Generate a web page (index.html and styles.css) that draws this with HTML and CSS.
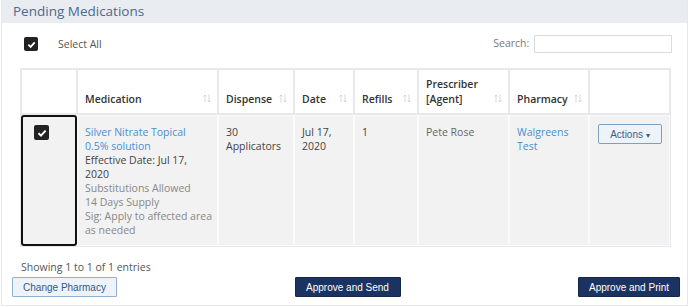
FILE: index.html
```html
<!DOCTYPE html>
<html lang="en">
  <head>
    <meta charset="UTF-8" />
    <title>Pending Medications</title>
    <link rel="stylesheet" href="styles.css">
  </head>
  <body>
    <div class="panel">
      <div class="panel-heading">Pending Medications</div>

      <div class="toolbar">
        <label class="select-all">
          <span class="check"><svg viewBox="0 0 10 10" width="9" height="9"><path d="M1.5 5.2 L4 7.6 L8.6 2.6" fill="none" stroke="#fff" stroke-width="2"/></svg></span>
          <span class="select-label">Select All</span>
        </label>
        <label class="search">Search: <input type="text"></label>
      </div>

      <table class="meds">
        <colgroup>
          <col class="col-sel">
          <col class="col-med">
          <col class="col-disp">
          <col class="col-date">
          <col class="col-ref">
          <col class="col-pres">
          <col class="col-pharm">
          <col class="col-act">
        </colgroup>
        <thead>
          <tr>
            <th></th>
            <th>Medication <span class="sort"><svg viewBox="0 0 8 9" width="8" height="9"><path d="M2 8.5V1 M0.5 2.5 L2 1 L3.5 2.5 M6 0.5V8 M4.5 6.5 L6 8 L7.5 6.5" fill="none" stroke="#cfd3d8" stroke-width="0.9"/></svg></span></th>
            <th>Dispense <span class="sort"><svg viewBox="0 0 8 9" width="8" height="9"><path d="M2 8.5V1 M0.5 2.5 L2 1 L3.5 2.5 M6 0.5V8 M4.5 6.5 L6 8 L7.5 6.5" fill="none" stroke="#cfd3d8" stroke-width="0.9"/></svg></span></th>
            <th>Date <span class="sort"><svg viewBox="0 0 8 9" width="8" height="9"><path d="M2 8.5V1 M0.5 2.5 L2 1 L3.5 2.5 M6 0.5V8 M4.5 6.5 L6 8 L7.5 6.5" fill="none" stroke="#cfd3d8" stroke-width="0.9"/></svg></span></th>
            <th>Refills <span class="sort"><svg viewBox="0 0 8 9" width="8" height="9"><path d="M2 8.5V1 M0.5 2.5 L2 1 L3.5 2.5 M6 0.5V8 M4.5 6.5 L6 8 L7.5 6.5" fill="none" stroke="#cfd3d8" stroke-width="0.9"/></svg></span></th>
            <th>Prescriber<br>[Agent] <span class="sort"><svg viewBox="0 0 8 9" width="8" height="9"><path d="M2 8.5V1 M0.5 2.5 L2 1 L3.5 2.5 M6 0.5V8 M4.5 6.5 L6 8 L7.5 6.5" fill="none" stroke="#cfd3d8" stroke-width="0.9"/></svg></span></th>
            <th>Pharmacy <span class="sort"><svg viewBox="0 0 8 9" width="8" height="9"><path d="M2 8.5V1 M0.5 2.5 L2 1 L3.5 2.5 M6 0.5V8 M4.5 6.5 L6 8 L7.5 6.5" fill="none" stroke="#cfd3d8" stroke-width="0.9"/></svg></span></th>
            <th></th>
          </tr>
        </thead>
        <tbody>
          <tr>
            <td class="cell-sel">
              <span class="check check-row"><svg viewBox="0 0 10 10" width="10" height="10"><path d="M1.5 5.2 L4 7.6 L8.6 2.6" fill="none" stroke="#fff" stroke-width="2"/></svg></span>
            </td>
            <td class="cell-med">
              <a href="#" class="link">Silver Nitrate Topical<br>0.5% solution</a><br>
              Effective Date: Jul 17, 2020<br>
              <span class="muted">Substitutions Allowed<br>14 Days Supply<br>Sig: Apply to affected area as needed</span>
            </td>
            <td>30 Applicators</td>
            <td>Jul 17, 2020</td>
            <td>1</td>
            <td class="muted">Pete Rose</td>
            <td><a href="#" class="link">Walgreens Test</a></td>
            <td><button class="btn-actions">Actions <span class="caret">&#9662;</span></button></td>
          </tr>
        </tbody>
      </table>

      <div class="info">Showing 1 to 1 of 1 entries</div>

      <div class="buttons">
        <button class="btn btn-light">Change Pharmacy</button>
        <button class="btn btn-dark">Approve and Send</button>
        <button class="btn btn-dark">Approve and Print</button>
      </div>
    </div>
  </body>
</html>
```

FILE: styles.css
```css
body {
  margin: 0;
  font-family: "Open Sans", "Liberation Sans", sans-serif;
  font-size: 10.5px;
  color: #444;
  background-color: #fff;
}
.panel {
  width: 685px;
  height: 305px;
  margin-left: 1px;
  border: 1px solid #e6e8eb;
  border-top: none;
}
.panel-heading {
  height: 23px;
  line-height: 23px;
  padding-left: 11px;
  font-size: 13.5px;
  color: #4b6a92;
  background-color: #e9ecf0;
}
.toolbar {
  display: flex;
  justify-content: space-between;
  align-items: center;
  height: 18px;
  margin: 12px 15px 0 22px;
}
.select-all {
  display: flex;
  align-items: center;
}
.check {
  display: inline-flex;
  align-items: center;
  justify-content: center;
  width: 14px;
  height: 14px;
  border-radius: 2px;
  background-color: #222;
}
.select-label {
  margin-left: 20px;
  color: #555;
}
.search {
  color: #777;
}
.search input {
  width: 132px;
  height: 14px;
  margin-left: 2px;
  border: 1px solid #d5dde6;
  vertical-align: middle;
}
.meds {
  width: 651px;
  margin: 15px 0 0 18px;
  border: 1px solid #e6e8eb;
  border-spacing: 0;
  table-layout: fixed;
}
.col-sel { width: 56px; }
.col-med { width: 141px; }
.col-disp { width: 76px; }
.col-date { width: 60px; }
.col-ref { width: 64px; }
.col-pres { width: 91px; }
.col-pharm { width: 80px; }
.meds th {
  height: 30px;
  padding: 7px 18px 6px 7px;
  text-align: left;
  vertical-align: bottom;
  font-weight: 600;
  color: #333;
  line-height: 15px;
  background-color: #fff;
  border: 1px solid #e6e8eb;
  border-bottom-width: 2px;
  position: relative;
}
.sort {
  position: absolute;
  right: 6px;
  bottom: 10px;
  line-height: 0;
}
.meds td {
  padding: 9px 10px 8px 7px;
  vertical-align: top;
  line-height: 14px;
  color: #444;
  background-color: #f2f2f2;
  border: 1px solid #fafafa;
}
.meds td.cell-med {
  padding-right: 4px;
}
.meds td.cell-sel {
  padding: 8px 0 0 11px;
  border: 2px solid #111;
  border-radius: 3px;
}
.check-row {
  width: 15px;
  height: 15px;
}
.link {
  color: #4a8fd0;
  text-decoration: none;
}
.muted {
  color: #888;
}
.meds td.muted {
  color: #666;
}
.btn-actions {
  width: 64px;
  height: 20px;
  margin: -1px 0 0 1px;
  padding: 0;
  font-family: "Liberation Sans", Arial, sans-serif;
  font-size: 10px;
  color: #3d5d85;
  background-color: #eef3f9;
  border: 1px solid #7f9fc0;
  border-radius: 2px;
}
.caret {
  font-size: 8px;
}
.info {
  margin: 13px 0 0 19px;
  line-height: 14px;
  color: #555;
}
.buttons {
  display: flex;
  justify-content: space-between;
  margin: 3px 7px 0 10px;
}
.btn {
  height: 20px;
  padding: 0;
  font-family: "Liberation Sans", Arial, sans-serif;
  font-size: 10px;
  border-radius: 1px;
}
.btn-light {
  width: 105px;
  color: #2f5a88;
  background-color: #eef3f9;
  border: 1px solid #8fb0d0;
}
.btn-dark {
  width: 106px;
  color: #fff;
  background-color: #1b3360;
  border: 1px solid #14284e;
}
.btn-dark:last-child {
  width: 102px;
}
```
